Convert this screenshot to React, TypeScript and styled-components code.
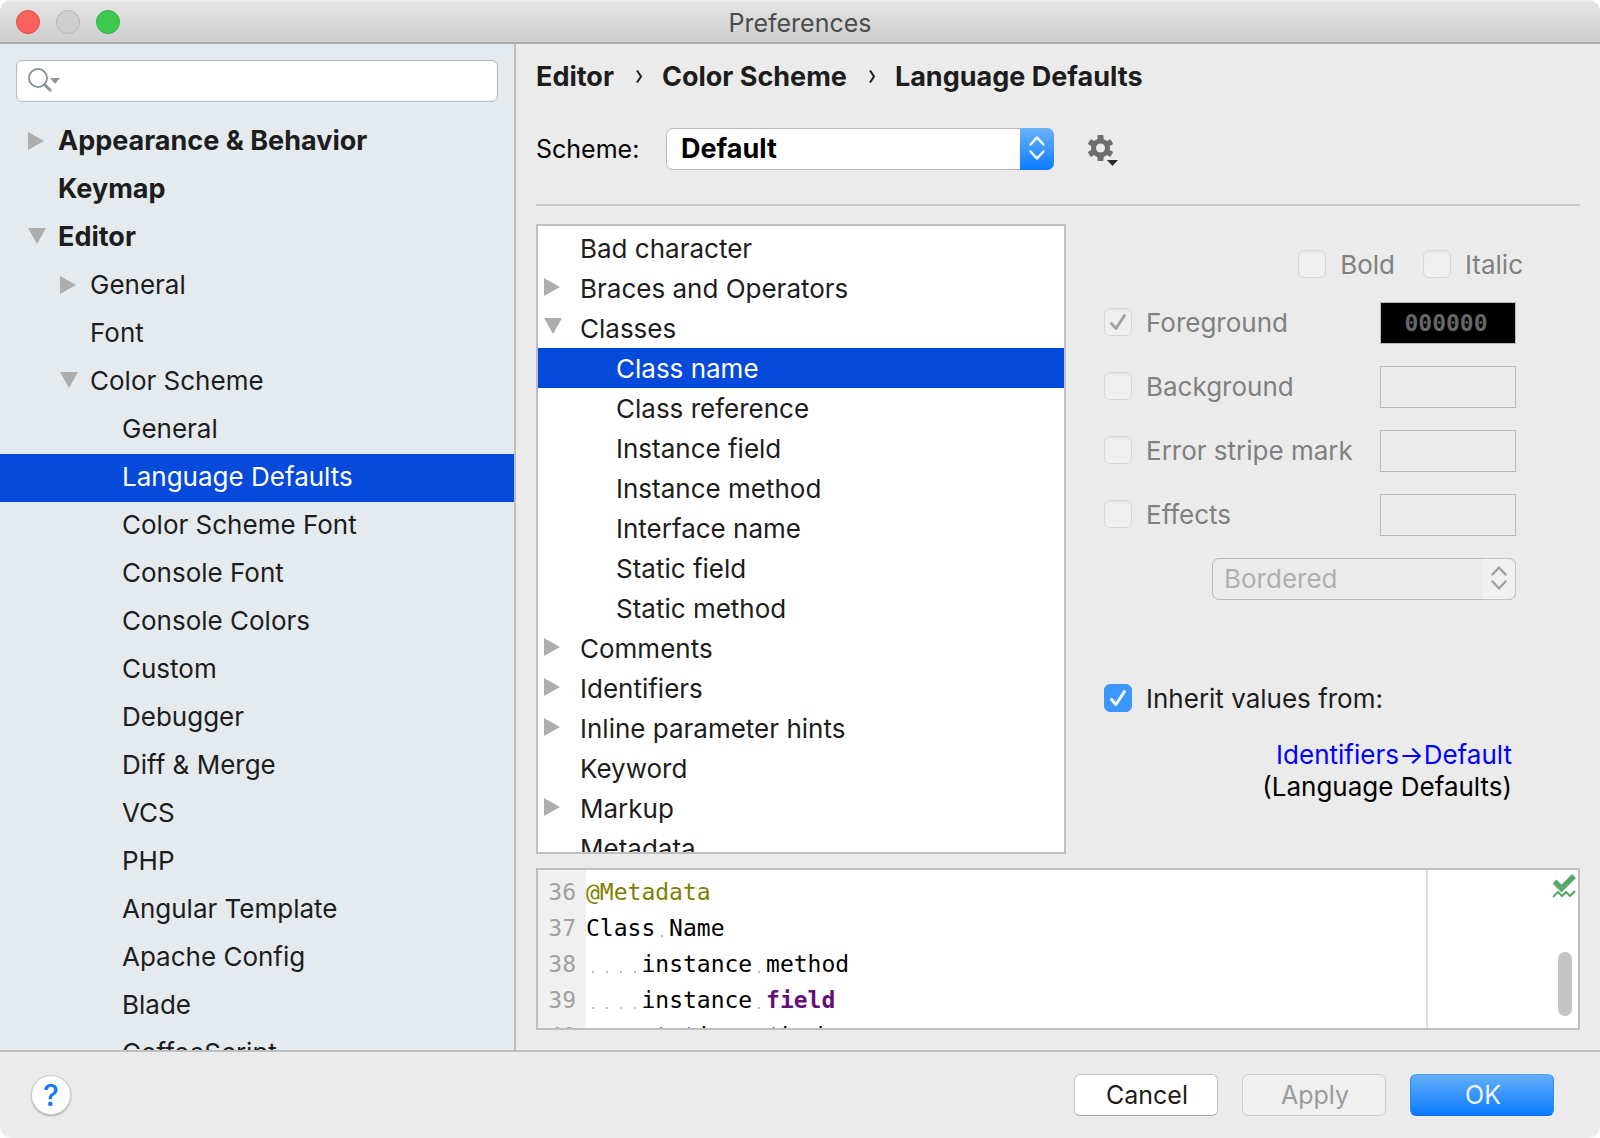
import React, { useState } from "react";
import styled, { createGlobalStyle, css } from "styled-components";

const UI = `Inter, Roboto, "Liberation Sans", sans-serif`;
const MONO = `"DejaVu Sans Mono", "Liberation Mono", monospace`;
const LINE = "#bfbfbf";
const SELECTED = "#064adb";

const GlobalStyle = createGlobalStyle`
  *, *::before, *::after { box-sizing: border-box; }
  body { margin: 0; background: #fff; }
  button, input, select { font: inherit; margin: 0; }
  ul { list-style: none; margin: 0; padding: 0; }
`;

const Window = styled.div`
  display: flex;
  flex-direction: column;
  height: 100vh;
  overflow: hidden;
  border-radius: 12px;
  background: #ebebeb;
  color: #1d1d1d;
  font-family: ${UI};
  font-size: 26px;
  line-height: 32px;
`;

const TitleBar = styled.header`
  display: grid;
  grid-template-columns: 1fr auto 1fr;
  align-items: center;
  flex: none;
  height: 44px;
  padding: 2px 16px 0;
  border-bottom: 2px solid #adadad;
  background: linear-gradient(#f4f4f4, #e4e4e4 3px, #cdcdcd);
`;

const Title = styled.h1`
  margin: 0;
  padding-top: 2px;
  font-size: 25px;
  font-weight: 400;
  color: #4c4c4c;
`;

const Lights = styled.div`
  display: flex;
  gap: 16px;
`;

const Light = styled.button<{ $fill: string; $edge: string }>`
  width: 24px;
  height: 24px;
  padding: 0;
  border: 1px solid ${(p) => p.$edge};
  border-radius: 50%;
  background: ${(p) => p.$fill};
`;

const Body = styled.div`
  display: flex;
  flex: 1;
  min-height: 0;
`;

const Sidebar = styled.aside`
  display: flex;
  flex-direction: column;
  flex: none;
  width: 516px;
  padding-top: 16px;
  border-right: 2px solid ${LINE};
  background: #e5eaee;
  overflow: hidden;
`;

const SearchBox = styled.label`
  display: flex;
  align-items: center;
  gap: 8px;
  flex: none;
  height: 42px;
  margin: 0 16px 16px;
  padding: 0 11px 2px;
  border: 1px solid #b9bdc0;
  border-radius: 6px;
  background: #fff;
  box-shadow: inset 0 0 2px #d8dcdf;

  svg { flex: none; }
`;

const SearchInput = styled.input`
  flex: 1;
  min-width: 0;
  border: 0;
  outline: 0;
  background: transparent;
`;

const NavTree = styled.ul`
  flex: 1;
  min-height: 0;
  overflow: hidden;
`;

const NavRow = styled.button<{ $depth: number; $selected: boolean }>`
  display: flex;
  align-items: center;
  gap: 12px;
  width: 100%;
  height: 48px;
  padding: 0 16px 2px ${(p) => 28 + p.$depth * 32}px;
  border: 0;
  background: ${(p) => (p.$selected ? SELECTED : "transparent")};
  color: ${(p) => (p.$selected ? "#fff" : "inherit")};
  font-size: ${(p) => (p.$depth === 0 ? 27 : 26)}px;
  font-weight: ${(p) => (p.$depth === 0 ? 700 : 400)};
  text-align: left;
  white-space: nowrap;
`;

const TwistySlot = styled.span`
  display: flex;
  flex: none;
  width: 18px;
`;

const Main = styled.main`
  display: flex;
  flex-direction: column;
  flex: 1;
  min-width: 0;
  padding: 17px 20px 20px;
`;

const Breadcrumb = styled.nav`
  display: flex;
  gap: 19px;
  font-size: 27px;
  font-weight: 700;
`;

const Crumb = styled.a`
  color: inherit;
  text-decoration: none;
`;

const Chevron = styled.svg`
  flex: none;
  width: 10px;
  height: 32px;
`;

const SchemeBar = styled.div`
  display: flex;
  align-items: center;
  margin-top: 35px;
  padding-bottom: 34px;
  border-bottom: 2px solid #cacaca;
  color: #000;
`;

const SchemeLabel = styled.label`
  width: 130px;
  font-size: 25px;
`;

const Picker = styled.div<{ $width: number }>`
  position: relative;
  width: ${(p) => p.$width}px;
  height: 42px;
`;

const Select = styled.select`
  appearance: none;
  width: 100%;
  height: 42px;
  padding: 0 44px 0 14px;
  border: 1px solid #b8b8b8;
  border-radius: 7px;
  background: #fff;
  color: #000;
  font-size: 27px;
  font-weight: 700;

  &:disabled {
    padding-left: 11px;
    background: #ebebeb;
    color: #afafaf;
    font-size: 26px;
    font-weight: 400;
    opacity: 1;
  }
`;

const PickerCap = styled.span<{ $off?: boolean }>`
  position: absolute;
  top: 0;
  right: 0;
  display: flex;
  align-items: center;
  justify-content: center;
  width: 34px;
  height: 42px;
  padding-bottom: 2px;
  border-radius: 0 7px 7px 0;
  pointer-events: none;
  ${(p) =>
    p.$off
      ? css`
          border: 1px solid #c4c4c4;
          border-left: 0;
          background: #f0f0f0;
          color: #a0a0a0;
        `
      : css`
          background: linear-gradient(#6cb3fa, #0a7bff);
          color: #fff;
        `}
`;

const GearButton = styled.button`
  display: flex;
  margin-left: 33px;
  padding: 2px 0 0;
  border: 0;
  background: none;
`;

const Split = styled.div`
  display: grid;
  grid-template-columns: minmax(0, 530fr) minmax(0, 514fr);
  grid-template-rows: minmax(0, 1fr);
  flex: 1;
  min-height: 0;
  margin: 18px 0 14px;
`;

const AttributeTree = styled.ul`
  padding-top: 2px;
  border: 2px solid ${LINE};
  background: #fff;
  overflow: hidden;
`;

const AttributeRow = styled.button<{ $depth: number; $selected: boolean }>`
  display: flex;
  align-items: center;
  gap: 18px;
  width: 100%;
  height: 40px;
  padding: 2px 6px 0 ${(p) => 6 + p.$depth * 36}px;
  border: 0;
  background: ${(p) => (p.$selected ? SELECTED : "transparent")};
  color: ${(p) => (p.$selected ? "#fff" : "inherit")};
  text-align: left;
  white-space: nowrap;

  ${TwistySlot} { padding-bottom: 4px; }
`;

const Options = styled.form`
  display: flex;
  flex-direction: column;
  padding: 25px 64px 0 38px;
`;

const StyleRow = styled.div`
  display: flex;
  justify-content: flex-end;
  gap: 28px;
  margin: 0 -7px 21px 0;
`;

const OptionRow = styled.div`
  display: flex;
  align-items: center;
  justify-content: space-between;
  height: 42px;
  margin-bottom: 22px;
`;

const CheckLabel = styled.label<{ $off?: boolean }>`
  display: flex;
  align-items: center;
  gap: 14px;
  color: ${(p) => (p.$off ? "#808080" : "inherit")};
  white-space: nowrap;
`;

const tick = (color: string) =>
  `url("data:image/svg+xml,%3Csvg xmlns='http://www.w3.org/2000/svg' viewBox='0 0 28 28' fill='none' stroke='%23${color}' stroke-width='3' stroke-linecap='round' stroke-linejoin='round'%3E%3Cpath d='M7.500 15.500 12 20.500 20.500 7.500'/%3E%3C/svg%3E")`;

const Check = styled.input.attrs({ type: "checkbox" })`
  appearance: none;
  flex: none;
  width: 28px;
  height: 28px;
  margin-bottom: 2px;
  border-radius: 6px;
  background: #fff;
  border: 1px solid #b8b8b8;

  &:checked {
    border-color: #3a96fd;
    background: ${tick("ffffff")} -1px -1px / 28px 28px no-repeat #3b97fe;
  }
  &:disabled {
    border-color: #d6d6d6;
    background-color: #f0f0f0;
    box-shadow: inset 0 2px 2px #e6e6e6;
  }
  &:disabled:checked {
    background-image: ${tick("a3a3a3")};
  }
`;

const ColorField = styled.input<{ $color?: string }>`
  width: 136px;
  height: 42px;
  padding: 0 4px 0 0;
  border: 1px solid #b9b9b9;
  border-radius: 0;
  background: ${(p) => p.$color ?? "transparent"};
  color: #666;
  font: 700 23px/32px ${MONO};
  text-align: center;
`;

const EffectRow = styled.div`
  display: flex;
  justify-content: flex-end;
`;

const InheritRow = styled.div`
  margin-top: 83px;
`;

const InheritSource = styled.p`
  margin: 24px 4px 0 0;
  color: #000;
  text-align: right;
`;

const SourceLink = styled.a`
  color: #00f;
  text-decoration: none;
`;

const Preview = styled.section`
  position: relative;
  display: flex;
  flex: none;
  height: 162px;
  border: 2px solid ${LINE};
  background: #fff;
  font: 23px/36px ${MONO};
  color: #000;
  overflow: hidden;
`;

const Gutter = styled.div`
  width: 48px;
  padding: 4px 10px 0 0;
  background: #f0f0f0;
  color: #a0a0a0;
  text-align: right;
`;

const Code = styled.div`
  flex: 1;
  padding-top: 4px;
  white-space: pre;
`;

const MarginGuide = styled.div`
  width: 152px;
  border-left: 2px solid #dedede;
`;

const Space = styled.span`
  background: linear-gradient(#bbb, #bbb) center bottom 4px / 2px 2px no-repeat;
`;

const Token = styled.span<{ $kind: string }>`
  ${(p) => p.$kind === "annotation" && "color: #808000;"}
  ${(p) => p.$kind === "field" && "color: #660e7a; font-weight: 700;"}
  ${(p) => p.$kind === "static" && "font-style: italic;"}
`;

const StatusMark = styled.svg`
  position: absolute;
  top: 4px;
  right: 2px;
`;

const ScrollThumb = styled.div`
  position: absolute;
  right: 6px;
  bottom: 12px;
  width: 14px;
  height: 64px;
  border-radius: 7px;
  background: #c4c4c4;
`;

const Footer = styled.footer`
  display: flex;
  align-items: center;
  gap: 24px;
  flex: none;
  height: 88px;
  padding: 0 46px 0 31px;
  border-top: 2px solid ${LINE};
`;

const HelpButton = styled.button`
  width: 40px;
  height: 40px;
  margin-right: auto;
  padding: 0;
  border: 1px solid #cfcfcf;
  border-radius: 50%;
  background: #fff;
  box-shadow: 0 1px 2px #a8a8a8;
  color: #0a7bff;
  font-size: 30px;
  font-weight: 500;
`;

const Button = styled.button<{ $primary?: boolean }>`
  width: 144px;
  height: 42px;
  padding: 0 0 0 2px;
  border: 1px solid #c3c3c3;
  border-bottom-color: #a8a8a8;
  border-radius: 6px;
  background: #fff;
  color: #1d1d1d;
  font-size: 25px;

  &:disabled {
    border-color: #cbcbcb;
    background: #f0f0f0;
    color: #9b9b9b;
  }
  ${(p) =>
    p.$primary &&
    css`
      border-color: #4a9ffb #2b8bfb #0a6cf5;
      background: linear-gradient(#64aefb, #0a7bff);
      color: #f0f4fa;
    `}
`;

type State = "open" | "closed" | "leaf";
type Item = [label: string, depth: number, state: State];

const pages: Item[] = [
  ["Appearance & Behavior", 0, "closed"],
  ["Keymap", 0, "leaf"],
  ["Editor", 0, "open"],
  ["General", 1, "closed"],
  ["Font", 1, "leaf"],
  ["Color Scheme", 1, "open"],
  ["General", 2, "leaf"],
  ["Language Defaults", 2, "leaf"],
  ["Color Scheme Font", 2, "leaf"],
  ["Console Font", 2, "leaf"],
  ["Console Colors", 2, "leaf"],
  ["Custom", 2, "leaf"],
  ["Debugger", 2, "leaf"],
  ["Diff & Merge", 2, "leaf"],
  ["VCS", 2, "leaf"],
  ["PHP", 2, "leaf"],
  ["Angular Template", 2, "leaf"],
  ["Apache Config", 2, "leaf"],
  ["Blade", 2, "leaf"],
  ["CoffeeScript", 2, "leaf"],
];

const attributes: Item[] = [
  ["Bad character", 0, "leaf"],
  ["Braces and Operators", 0, "closed"],
  ["Classes", 0, "open"],
  ["Class name", 1, "leaf"],
  ["Class reference", 1, "leaf"],
  ["Instance field", 1, "leaf"],
  ["Instance method", 1, "leaf"],
  ["Interface name", 1, "leaf"],
  ["Static field", 1, "leaf"],
  ["Static method", 1, "leaf"],
  ["Comments", 0, "closed"],
  ["Identifiers", 0, "closed"],
  ["Inline parameter hints", 0, "closed"],
  ["Keyword", 0, "leaf"],
  ["Markup", 0, "closed"],
  ["Metadata", 0, "leaf"],
];

const code: [string, string][][] = [
  [["annotation", "@Metadata"]],
  [["plain", "Class Name"]],
  [["plain", "    instance method"]],
  [["plain", "    instance "], ["field", "field"]],
  [["plain", "    static "], ["static", "method"]],
];

const colorRows = [
  { label: "Foreground", checked: true, value: "000000", color: "#000" },
  { label: "Background", checked: false, value: "" },
  { label: "Error stripe mark", checked: false, value: "" },
  { label: "Effects", checked: false, value: "" },
];

const Twisty = ({ state }: { state: State }) => (
  <TwistySlot>
    {state !== "leaf" && (
      <svg width="18" height="18" viewBox="0 0 18 18" fill="#adadad" aria-hidden="true">
        <path d={state === "open" ? "M0 0h18L9 16z" : "M0 0v18l16-9z"} />
      </svg>
    )}
  </TwistySlot>
);

const UpDown = () => (
  <svg width="18" height="26" viewBox="0 0 18 26" fill="none" stroke="currentColor" strokeWidth="2.4" strokeLinecap="round" strokeLinejoin="round" aria-hidden="true">
    <path d="M2.500 9.500 9 2.500l6.500 7M2.500 16.500 9 23.500l6.500-7" />
  </svg>
);

const withSpaces = (text: string) =>
  text.split(/( )/).map((part, i) => (part === " " ? <Space key={i}> </Space> : part));

export default function App() {
  const [page, setPage] = useState(7);
  const [attribute, setAttribute] = useState(3);
  const [inherit, setInherit] = useState(true);

  return (
    <Window>
      <GlobalStyle />
      <TitleBar>
        <Lights>
          <Light $fill="#fc625d" $edge="#de4b46" aria-label="Close" />
          <Light $fill="#cfcfcf" $edge="#b3b3b3" aria-label="Minimize" disabled />
          <Light $fill="#3ec950" $edge="#2fae3e" aria-label="Zoom" />
        </Lights>
        <Title>Preferences</Title>
      </TitleBar>

      <Body>
        <Sidebar>
          <SearchBox>
            <svg width="34" height="26" viewBox="0 0 34 26" fill="none" aria-hidden="true">
              <circle cx="10" cy="11" r="9" stroke="#8d969d" strokeWidth="2" />
              <path d="M16.500 17.500 23 24" stroke="#8d969d" strokeWidth="3" />
              <path d="M22 11h10l-5 6z" fill="#8d969d" />
            </svg>
            <SearchInput type="text" aria-label="Search settings" />
          </SearchBox>
          <NavTree>
            {pages.map(([label, depth, state], i) => (
              <li key={i}>
                <NavRow $depth={depth} $selected={i === page} onClick={() => setPage(i)}>
                  <Twisty state={state} />
                  {label}
                </NavRow>
              </li>
            ))}
          </NavTree>
        </Sidebar>

        <Main>
          <Breadcrumb>
            {["Editor", "Color Scheme", "Language Defaults"].map((name, i) => (
              <React.Fragment key={name}>
                {i > 0 && (
                  <Chevron viewBox="0 0 10 32" fill="none" stroke="#1d1d1d" strokeWidth="2" aria-hidden="true">
                    <path d="M4 9.500l4 6-4 6" />
                  </Chevron>
                )}
                <Crumb href="#">{name}</Crumb>
              </React.Fragment>
            ))}
          </Breadcrumb>

          <SchemeBar>
            <SchemeLabel htmlFor="scheme">Scheme:</SchemeLabel>
            <Picker $width={388}>
              <Select id="scheme" defaultValue="Default">
                <option>Default</option>
              </Select>
              <PickerCap>
                <UpDown />
              </PickerCap>
            </Picker>
            <GearButton aria-label="Scheme actions">
              <svg width="32" height="32" viewBox="0 0 32 32" aria-hidden="true">
                <g fill="#6e6e6e">
                  {[0, 60, 120].map((a) => (
                    <rect key={a} x="10.500" y="1" width="6" height="26" rx="1" transform={`rotate(${a} 13.500 14)`} />
                  ))}
                  <circle cx="13.500" cy="14" r="9.500" />
                </g>
                <circle cx="13.500" cy="14" r="4.500" fill="#ebebeb" />
                <path d="M20 26h11l-5.500 6z" fill="#2b2b2b" />
              </svg>
            </GearButton>
          </SchemeBar>

          <Split>
            <AttributeTree>
              {attributes.map(([label, depth, state], i) => (
                <li key={label}>
                  <AttributeRow $depth={depth} $selected={i === attribute} onClick={() => setAttribute(i)}>
                    <Twisty state={state} />
                    {label}
                  </AttributeRow>
                </li>
              ))}
            </AttributeTree>

            <Options>
              <StyleRow>
                <CheckLabel $off>
                  <Check disabled />
                  Bold
                </CheckLabel>
                <CheckLabel $off>
                  <Check disabled />
                  Italic
                </CheckLabel>
              </StyleRow>
              {colorRows.map((row) => (
                <OptionRow key={row.label}>
                  <CheckLabel $off>
                    <Check disabled defaultChecked={row.checked} />
                    {row.label}
                  </CheckLabel>
                  <ColorField $color={row.color} defaultValue={row.value} aria-label={`${row.label} color`} disabled />
                </OptionRow>
              ))}
              <EffectRow>
                <Picker $width={304}>
                  <Select aria-label="Effect type" defaultValue="Bordered" disabled>
                    <option>Bordered</option>
                  </Select>
                  <PickerCap $off>
                    <UpDown />
                  </PickerCap>
                </Picker>
              </EffectRow>
              <InheritRow>
                <CheckLabel>
                  <Check checked={inherit} onChange={(e) => setInherit(e.target.checked)} />
                  Inherit values from:
                </CheckLabel>
              </InheritRow>
              <InheritSource>
                <SourceLink href="#">Identifiers→Default</SourceLink>
                <br />
                (Language Defaults)
              </InheritSource>
            </Options>
          </Split>

          <Preview>
            <Gutter>
              {code.map((_, i) => (
                <div key={i}>{36 + i}</div>
              ))}
            </Gutter>
            <Code>
              {code.map((line, i) => (
                <div key={i}>
                  {line.map(([kind, text], j) => (
                    <Token key={j} $kind={kind}>
                      {withSpaces(text)}
                    </Token>
                  ))}
                </div>
              ))}
            </Code>
            <MarginGuide />
            <StatusMark width="24" height="24" viewBox="0 0 24 24" fill="none" stroke="#59a869" aria-hidden="true">
              <path d="M2.500 7.500l7 7L22 2" strokeWidth="5.500" />
              <path d="M1 23l5-5 4 4 4-4 4 4 5-5" strokeWidth="2" />
            </StatusMark>
            <ScrollThumb />
          </Preview>
        </Main>
      </Body>

      <Footer>
        <HelpButton aria-label="Help">?</HelpButton>
        <Button>Cancel</Button>
        <Button disabled>Apply</Button>
        <Button $primary>OK</Button>
      </Footer>
    </Window>
  );
}
